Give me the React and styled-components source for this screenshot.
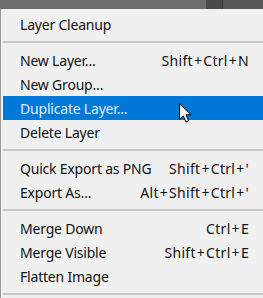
import React from 'react';
import styled, { createGlobalStyle } from 'styled-components';

const GlobalStyle = createGlobalStyle`
  html, body {
    margin: 0;
    padding: 0;
    background: #f0f0f0;
  }
  body {
    width: 263px;
    height: 298px;
    overflow: hidden;
  }
`;

const menu = [
  { label: 'Layer Cleanup' },
  { sep: true },
  { label: 'New Layer...', shortcut: 'Shift+Ctrl+N' },
  { label: 'New Group...' },
  { label: 'Duplicate Layer...', active: true },
  { label: 'Delete Layer' },
  { sep: true },
  { label: 'Quick Export as PNG', shortcut: "Shift+Ctrl+'" },
  { label: 'Export As...', shortcut: "Alt+Shift+Ctrl+'" },
  { sep: true },
  { label: 'Merge Down', shortcut: 'Ctrl+E' },
  { label: 'Merge Visible', shortcut: 'Shift+Ctrl+E' },
  { label: 'Flatten Image' },
  { sep: true },
];

const Cursor = () => (
  <CursorSvg width="14" height="21" viewBox="0 0 14 21">
    <path
      d="M0.5 0.5 L0.5 16.5 L4.3 12.8 L7 19 L9.6 17.9 L7 11.8 L12 11.8 Z"
      fill="#ffffff"
      stroke="#000000"
      strokeWidth="1"
      strokeLinejoin="miter"
    />
  </CursorSvg>
);

// split "Shift+Ctrl+N" so the plus signs get a little air, like Segoe UI
const renderShortcut = (text) => {
  const parts = text.split('+');
  return parts.map((part, i) => (
    <React.Fragment key={i}>
      {i > 0 && <Plus>+</Plus>}
      {part}
    </React.Fragment>
  ));
};

const App = () => {
  return (
    <Page>
      <GlobalStyle />
      <TopBar>
        <BarSegment $width="206px" $color="#6d6d6d" />
        <BarSegment $width="16px" $color="#4b4b4b" />
        <BarSegment $width="1px" $color="#343434" />
        <BarSegment $grow $color="#575757" />
      </TopBar>
      <Menu>
        {menu.map((item, i) =>
          item.sep ? (
            <Separator key={i} />
          ) : (
            <Item key={i} $active={item.active}>
              <Label>{item.label}</Label>
              {item.shortcut && <Shortcut>{renderShortcut(item.shortcut)}</Shortcut>}
            </Item>
          )
        )}
        <Cursor />
      </Menu>
    </Page>
  );
};

const Page = styled.div`
  width: 263px;
  height: 298px;
  display: flex;
  flex-direction: column;
  font-family: 'Noto Sans', 'Open Sans', sans-serif;
`;

const TopBar = styled.div`
  display: flex;
  height: 9px;
  flex-shrink: 0;
`;

const BarSegment = styled.div`
  width: ${(p) => p.$width || 'auto'};
  flex: ${(p) => (p.$grow ? '1' : 'none')};
  background: ${(p) => p.$color};
`;

const Menu = styled.div`
  position: relative;
  flex: 1;
  display: flex;
  flex-direction: column;
  padding: 3px 0 0 2px;
  background: #f0f0f0;
  border-left: 1px solid #9a9a9a;
`;

const Item = styled.div`
  display: flex;
  align-items: center;
  justify-content: space-between;
  height: 24px;
  flex-shrink: 0;
  padding: 0 14px 0 17px;
  background: ${(p) => (p.$active ? '#0078d7' : 'transparent')};
  color: ${(p) => (p.$active ? '#e3effb' : '#111111')};
  font-size: 14px;
  letter-spacing: -0.2px;
`;

const Label = styled.span`
  white-space: nowrap;
`;

const Shortcut = styled.span`
  white-space: nowrap;
  letter-spacing: 0.3px;
`;

const Plus = styled.span`
  margin: 0 1px;
`;

const Separator = styled.div`
  height: 12px;
  flex-shrink: 0;
  display: flex;
  align-items: center;
  &::after {
    content: '';
    display: block;
    width: 100%;
    height: 2px;
    background: #c6c6c6;
  }
`;

const CursorSvg = styled.svg`
  position: absolute;
  left: 178px;
  top: 94px;
`;

export default App;
